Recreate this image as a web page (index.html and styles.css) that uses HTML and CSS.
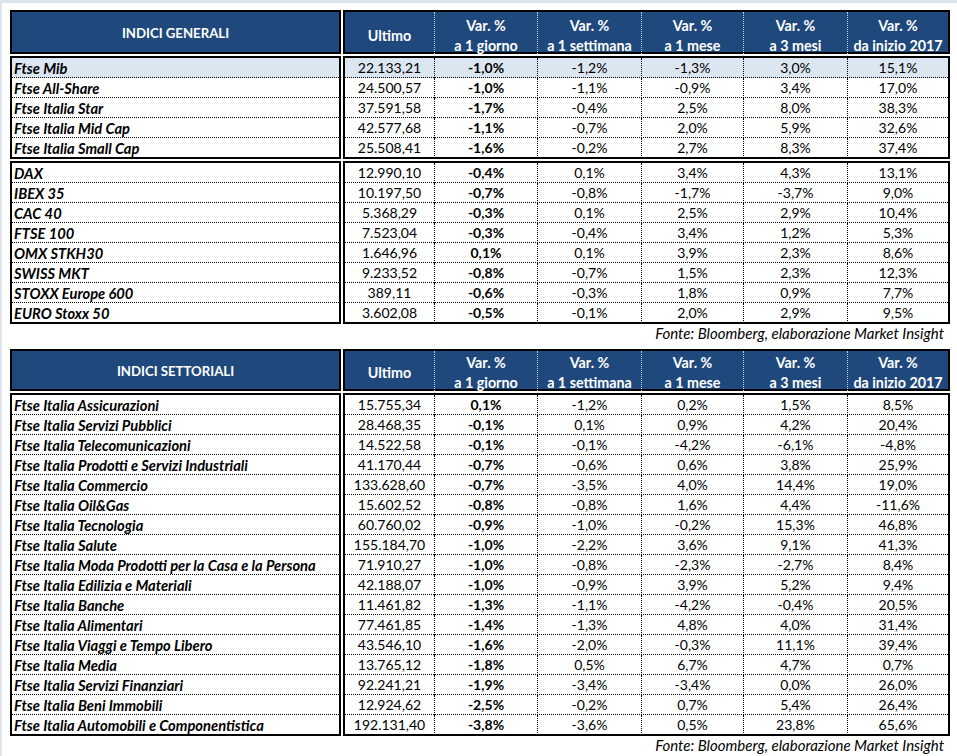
FILE: index.html
```html
<!DOCTYPE html>
<html lang="it">
<head>
<meta charset="utf-8">
<title>Indici</title>
<link rel="stylesheet" href="styles.css">
</head>
<body>
<div class="page">
  <section class="tbl t1">
    <div class="band head">
      <div class="block name-block head-name">INDICI GENERALI</div>
      <div class="block data-block head-data">
        <div class="hc single">Ultimo</div>
        <div class="hc"><span>Var. %</span><span>a 1 giorno</span></div>
        <div class="hc"><span>Var. %</span><span>a 1 settimana</span></div>
        <div class="hc"><span>Var. %</span><span>a 1 mese</span></div>
        <div class="hc"><span>Var. %</span><span>a 3 mesi</span></div>
        <div class="hc"><span>Var. %</span><span>da inizio 2017</span></div>
      </div>
    </div>
    <div class="band">
      <div class="block name-block">
        <div class="nrow hl">Ftse Mib</div>
        <div class="nrow">Ftse All-Share</div>
        <div class="nrow">Ftse Italia Star</div>
        <div class="nrow">Ftse Italia Mid Cap</div>
        <div class="nrow">Ftse Italia Small Cap</div>
      </div>
      <div class="block data-block">
        <div class="drow hl"><div>22.133,21</div><div class="b">-1,0%</div><div>-1,2%</div><div>-1,3%</div><div>3,0%</div><div>15,1%</div></div>
        <div class="drow"><div>24.500,57</div><div class="b">-1,0%</div><div>-1,1%</div><div>-0,9%</div><div>3,4%</div><div>17,0%</div></div>
        <div class="drow"><div>37.591,58</div><div class="b">-1,7%</div><div>-0,4%</div><div>2,5%</div><div>8,0%</div><div>38,3%</div></div>
        <div class="drow"><div>42.577,68</div><div class="b">-1,1%</div><div>-0,7%</div><div>2,0%</div><div>5,9%</div><div>32,6%</div></div>
        <div class="drow"><div>25.508,41</div><div class="b">-1,6%</div><div>-0,2%</div><div>2,7%</div><div>8,3%</div><div>37,4%</div></div>
      </div>
    </div>
    <div class="band">
      <div class="block name-block">
        <div class="nrow">DAX</div>
        <div class="nrow">IBEX 35</div>
        <div class="nrow">CAC 40</div>
        <div class="nrow">FTSE 100</div>
        <div class="nrow">OMX STKH30</div>
        <div class="nrow">SWISS MKT</div>
        <div class="nrow">STOXX Europe 600</div>
        <div class="nrow">EURO Stoxx 50</div>
      </div>
      <div class="block data-block">
        <div class="drow"><div>12.990,10</div><div class="b">-0,4%</div><div>0,1%</div><div>3,4%</div><div>4,3%</div><div>13,1%</div></div>
        <div class="drow"><div>10.197,50</div><div class="b">-0,7%</div><div>-0,8%</div><div>-1,7%</div><div>-3,7%</div><div>9,0%</div></div>
        <div class="drow"><div>5.368,29</div><div class="b">-0,3%</div><div>0,1%</div><div>2,5%</div><div>2,9%</div><div>10,4%</div></div>
        <div class="drow"><div>7.523,04</div><div class="b">-0,3%</div><div>-0,4%</div><div>3,4%</div><div>1,2%</div><div>5,3%</div></div>
        <div class="drow"><div>1.646,96</div><div class="b">0,1%</div><div>0,1%</div><div>3,9%</div><div>2,3%</div><div>8,6%</div></div>
        <div class="drow"><div>9.233,52</div><div class="b">-0,8%</div><div>-0,7%</div><div>1,5%</div><div>2,3%</div><div>12,3%</div></div>
        <div class="drow"><div>389,11</div><div class="b">-0,6%</div><div>-0,3%</div><div>1,8%</div><div>0,9%</div><div>7,7%</div></div>
        <div class="drow"><div>3.602,08</div><div class="b">-0,5%</div><div>-0,1%</div><div>2,0%</div><div>2,9%</div><div>9,5%</div></div>
      </div>
    </div>
    <p class="source">Fonte: Bloomberg, elaborazione Market Insight</p>
  </section>

  <section class="tbl t2">
    <div class="band head">
      <div class="block name-block head-name">INDICI SETTORIALI</div>
      <div class="block data-block head-data">
        <div class="hc single">Ultimo</div>
        <div class="hc"><span>Var. %</span><span>a 1 giorno</span></div>
        <div class="hc"><span>Var. %</span><span>a 1 settimana</span></div>
        <div class="hc"><span>Var. %</span><span>a 1 mese</span></div>
        <div class="hc"><span>Var. %</span><span>a 3 mesi</span></div>
        <div class="hc"><span>Var. %</span><span>da inizio 2017</span></div>
      </div>
    </div>
    <div class="band">
      <div class="block name-block">
        <div class="nrow">Ftse Italia Assicurazioni</div>
        <div class="nrow">Ftse Italia Servizi Pubblici</div>
        <div class="nrow">Ftse Italia Telecomunicazioni</div>
        <div class="nrow">Ftse Italia Prodotti e Servizi Industriali</div>
        <div class="nrow">Ftse Italia Commercio</div>
        <div class="nrow">Ftse Italia Oil&amp;Gas</div>
        <div class="nrow">Ftse Italia Tecnologia</div>
        <div class="nrow">Ftse Italia Salute</div>
        <div class="nrow">Ftse Italia Moda Prodotti per la Casa e la Persona</div>
        <div class="nrow">Ftse Italia Edilizia e Materiali</div>
        <div class="nrow">Ftse Italia Banche</div>
        <div class="nrow">Ftse Italia Alimentari</div>
        <div class="nrow">Ftse Italia Viaggi e Tempo Libero</div>
        <div class="nrow">Ftse Italia Media</div>
        <div class="nrow">Ftse Italia Servizi Finanziari</div>
        <div class="nrow">Ftse Italia Beni Immobili</div>
        <div class="nrow">Ftse Italia Automobili e Componentistica</div>
      </div>
      <div class="block data-block">
        <div class="drow"><div>15.755,34</div><div class="b">0,1%</div><div>-1,2%</div><div>0,2%</div><div>1,5%</div><div>8,5%</div></div>
        <div class="drow"><div>28.468,35</div><div class="b">-0,1%</div><div>0,1%</div><div>0,9%</div><div>4,2%</div><div>20,4%</div></div>
        <div class="drow"><div>14.522,58</div><div class="b">-0,1%</div><div>-0,1%</div><div>-4,2%</div><div>-6,1%</div><div>-4,8%</div></div>
        <div class="drow"><div>41.170,44</div><div class="b">-0,7%</div><div>-0,6%</div><div>0,6%</div><div>3,8%</div><div>25,9%</div></div>
        <div class="drow"><div>133.628,60</div><div class="b">-0,7%</div><div>-3,5%</div><div>4,0%</div><div>14,4%</div><div>19,0%</div></div>
        <div class="drow"><div>15.602,52</div><div class="b">-0,8%</div><div>-0,8%</div><div>1,6%</div><div>4,4%</div><div>-11,6%</div></div>
        <div class="drow"><div>60.760,02</div><div class="b">-0,9%</div><div>-1,0%</div><div>-0,2%</div><div>15,3%</div><div>46,8%</div></div>
        <div class="drow"><div>155.184,70</div><div class="b">-1,0%</div><div>-2,2%</div><div>3,6%</div><div>9,1%</div><div>41,3%</div></div>
        <div class="drow"><div>71.910,27</div><div class="b">-1,0%</div><div>-0,8%</div><div>-2,3%</div><div>-2,7%</div><div>8,4%</div></div>
        <div class="drow"><div>42.188,07</div><div class="b">-1,0%</div><div>-0,9%</div><div>3,9%</div><div>5,2%</div><div>9,4%</div></div>
        <div class="drow"><div>11.461,82</div><div class="b">-1,3%</div><div>-1,1%</div><div>-4,2%</div><div>-0,4%</div><div>20,5%</div></div>
        <div class="drow"><div>77.461,85</div><div class="b">-1,4%</div><div>-1,3%</div><div>4,8%</div><div>4,0%</div><div>31,4%</div></div>
        <div class="drow"><div>43.546,10</div><div class="b">-1,6%</div><div>-2,0%</div><div>-0,3%</div><div>11,1%</div><div>39,4%</div></div>
        <div class="drow"><div>13.765,12</div><div class="b">-1,8%</div><div>0,5%</div><div>6,7%</div><div>4,7%</div><div>0,7%</div></div>
        <div class="drow"><div>92.241,21</div><div class="b">-1,9%</div><div>-3,4%</div><div>-3,4%</div><div>0,0%</div><div>26,0%</div></div>
        <div class="drow"><div>12.924,62</div><div class="b">-2,5%</div><div>-0,2%</div><div>0,7%</div><div>5,4%</div><div>26,4%</div></div>
        <div class="drow"><div>192.131,40</div><div class="b">-3,8%</div><div>-3,6%</div><div>0,5%</div><div>23,8%</div><div>65,6%</div></div>
      </div>
    </div>
    <p class="source">Fonte: Bloomberg, elaborazione Market Insight</p>
  </section>
</div>
</body>
</html>
```

FILE: styles.css
```css
html, body {
  margin: 0;
  padding: 0;
  background: #dde4ee;
}

body {
  font-family: Lato, "Open Sans", "Liberation Sans", sans-serif;
  font-size: 14px;
  color: #000;
}

.page {
  margin: 3px 0 0 2px;
  padding: 7px 0 0 8px;
  width: 955px;
  height: 753px;
  box-sizing: border-box;
  background: #fff;
  overflow: hidden;
}

.tbl {
  width: 940px;
}

.band {
  display: flex;
  gap: 2px;
}

.band + .band {
  margin-top: 2px;
}

.block {
  border: 2px solid #000;
}

.name-block {
  width: 327px;
}

.data-block {
  width: 603px;
}

.head .block {
  background: #1f497d;
  color: #fff;
  font-weight: bold;
  box-sizing: content-box;
}

.t1 .head .block {
  height: 36px;
  padding-top: 4px;
}

.t1 .head .head-name {
  height: 38px;
  padding-top: 2px;
}

.t2 .head .block {
  height: 36px;
  padding-top: 2px;
}

.head-name {
  display: flex;
  align-items: center;
  justify-content: center;
  font-size: 13.2px;
}

.head-data {
  display: grid;
  grid-template-columns: 90px 103px 104px 102px 104px 100px;
  font-size: 14.3px;
}

.hc {
  display: flex;
  flex-direction: column;
  align-items: center;
  justify-content: center;
  line-height: 20px;
  border-right: 1px dotted #c8d3e3;
}

.t1 .hc {
  margin-top: -4px;
  padding-top: 4px;
}

.t2 .hc {
  margin-top: -2px;
  padding-top: 2px;
}

.hc:last-child {
  border-right: none;
}

.nrow {
  height: 19px;
  line-height: 20px;
  padding-left: 2px;
  border-bottom: 1px dotted #000;
  font-size: 14.7px;
  font-weight: bold;
  font-style: italic;
  white-space: nowrap;
  overflow: hidden;
}

.drow {
  display: grid;
  grid-template-columns: 90px 103px 104px 102px 104px 100px;
  height: 19px;
  border-bottom: 1px dotted #000;
}

.nrow:last-child,
.drow:last-child {
  border-bottom: none;
}

.drow > div {
  line-height: 20px;
  text-align: center;
  border-right: 1px dotted #000;
  white-space: nowrap;
}

.drow > div:last-child {
  border-right: none;
}

.drow .b {
  font-weight: bold;
}

.hl {
  background: #dce6f1;
}

.source {
  margin: 0 0 7px 0;
  height: 18px;
  line-height: 18px;
  padding-right: 6px;
  text-align: right;
  font-size: 15px;
  font-style: italic;
}
```
